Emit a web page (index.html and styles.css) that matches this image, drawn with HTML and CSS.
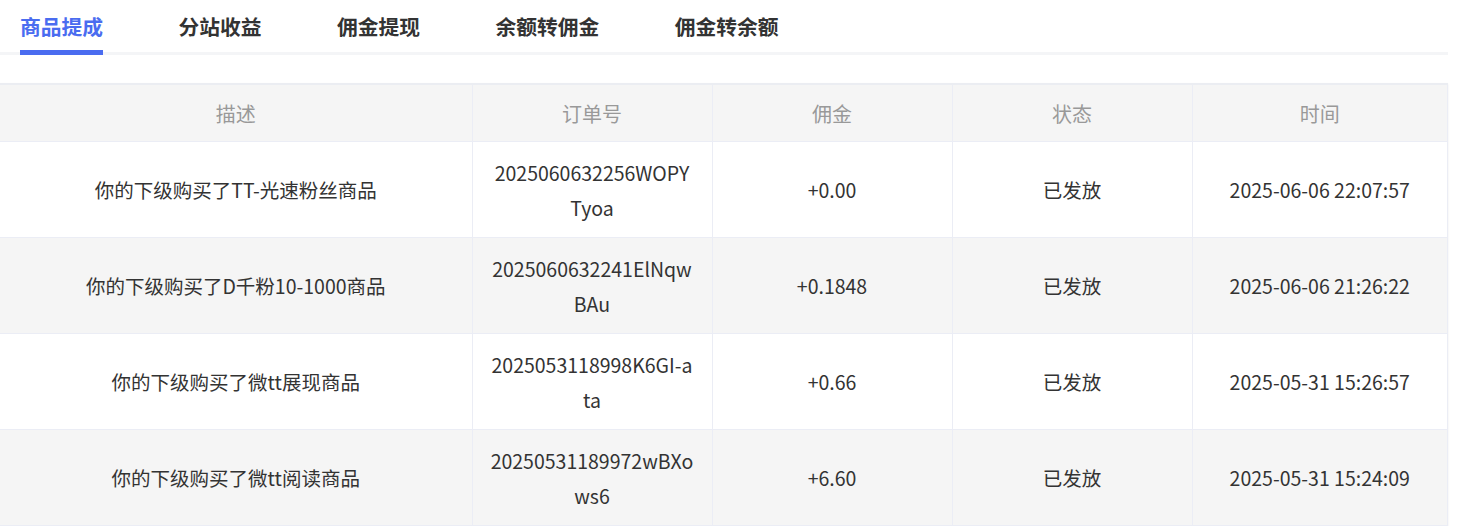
FILE: index.html
```html
<!DOCTYPE html>
<html lang="zh-CN">
<head>
  <meta charset="UTF-8" />
  <meta name="viewport" content="width=device-width, initial-scale=1.0"/>
  <title>佣金明细</title>
  <link rel="stylesheet" href="styles.css">
</head>
<body>
  <div class="page">
    <div class="tabs">
      <div class="tab active">商品提成</div>
      <div class="tab">分站收益</div>
      <div class="tab">佣金提现</div>
      <div class="tab">余额转佣金</div>
      <div class="tab">佣金转余额</div>
    </div>

    <table class="list">
      <colgroup>
        <col style="width:472px">
        <col style="width:240px">
        <col style="width:240px">
        <col style="width:240px">
        <col>
      </colgroup>
      <thead>
        <tr>
          <th>描述</th>
          <th>订单号</th>
          <th>佣金</th>
          <th>状态</th>
          <th>时间</th>
        </tr>
      </thead>
      <tbody>
        <tr>
          <td>你的下级购买了TT-光速粉丝商品</td>
          <td class="order">2025060632256WOPYTyoa</td>
          <td>+0.00</td>
          <td>已发放</td>
          <td>2025-06-06 22:07:57</td>
        </tr>
        <tr>
          <td>你的下级购买了D千粉10-1000商品</td>
          <td class="order">2025060632241ElNqwBAu</td>
          <td>+0.1848</td>
          <td>已发放</td>
          <td>2025-06-06 21:26:22</td>
        </tr>
        <tr>
          <td>你的下级购买了微tt展现商品</td>
          <td class="order">2025053118998K6GI-ata</td>
          <td>+0.66</td>
          <td>已发放</td>
          <td>2025-05-31 15:26:57</td>
        </tr>
        <tr>
          <td>你的下级购买了微tt阅读商品</td>
          <td class="order">20250531189972wBXows6</td>
          <td>+6.60</td>
          <td>已发放</td>
          <td>2025-05-31 15:24:09</td>
        </tr>
      </tbody>
    </table>
  </div>
</body>
</html>
```

FILE: styles.css
```css
body {
  margin: 0;
  font-family: "Noto Sans CJK SC", "Noto Sans", sans-serif;
  background: #fff;
  color: #333;
}
.page {
  width: 1448px;
}
.tabs {
  display: flex;
  gap: 75.5px;
  padding: 0 20px;
  height: 52px;
  border-bottom: 3px solid #f4f5f7;
}
.tab {
  font-size: 20.75px;
  font-weight: bold;
  line-height: 52px;
  color: #333;
  position: relative;
}
.tab.active {
  color: #4a6cf0;
}
.tab.active::after {
  content: "";
  position: absolute;
  left: 0;
  right: 0;
  bottom: -3px;
  height: 5px;
  background: #4a6cf0;
}
.list {
  margin-top: 28px;
  width: 1448px;
  border-collapse: collapse;
  table-layout: fixed;
  box-shadow: 0 1px 2px rgba(0, 0, 0, 0.08);
  border-top: 2px solid #ebedf2;
}
.list th,
.list td {
  text-align: center;
  border: 1px solid #ebedf5;
  border-top: none;
}
.list th:first-child,
.list td:first-child {
  border-left: none;
}
.list th {
  height: 54px;
  font-size: 20px;
  font-weight: normal;
  color: #999;
  background: #f5f5f5;
}
.list td {
  height: 95px;
  padding: 0 18px;
  font-size: 19.5px;
  line-height: 35px;
  color: #333;
}
.list td.order {
  word-break: break-all;
}
.list tbody tr:nth-child(even) td {
  background: #f5f5f5;
}
```
